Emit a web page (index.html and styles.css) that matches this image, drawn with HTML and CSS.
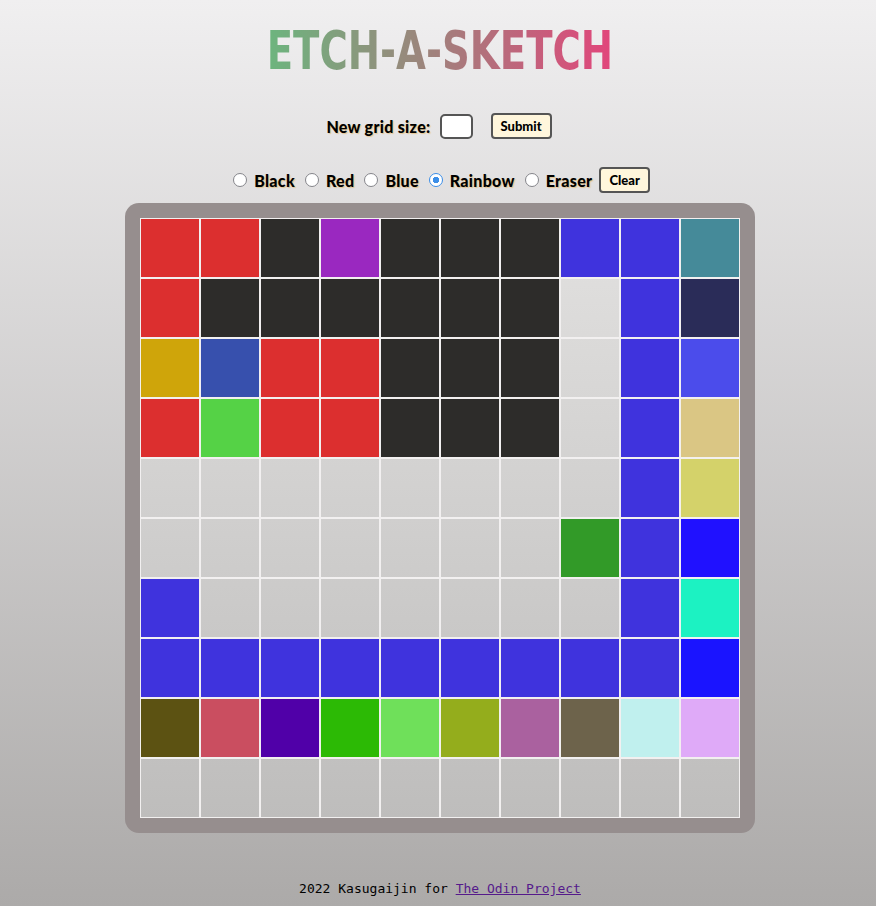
FILE: index.html
```html
<!DOCTYPE html>
<html lang="en">
<head>
<meta charset="utf-8">
<title>Etch-A-Sketch</title>
<link rel="stylesheet" href="styles.css">
</head>
<body>
<main class="page">
  <h1 class="title"><span class="title-text">ETCH-A-SKETCH</span></h1>
  <form class="size-row">
    <label class="lbl" for="size">New grid size:</label>
    <input class="size-input" id="size" type="text">
    <button class="btn" type="button">Submit</button>
  </form>
  <div class="mode-row">
    <label class="opt"><input class="radio" type="radio" name="mode"> Black</label>
    <label class="opt"><input class="radio" type="radio" name="mode"> Red</label>
    <label class="opt"><input class="radio" type="radio" name="mode"> Blue</label>
    <label class="opt"><input class="radio" type="radio" name="mode" checked> Rainbow</label>
    <label class="opt"><input class="radio" type="radio" name="mode"> Eraser</label>
    <button class="btn" type="button">Clear</button>
  </div>
  <div class="board">
    <div class="grid" id="grid"></div>
  </div>
  <footer class="footer">2022 Kasugaijin for <a href="#">The Odin Project</a></footer>
</main>
<script src="script.js"></script>
</body>
</html>
```
FILE: styles.css
```css
html, body { margin: 0; padding: 0; }
body {
  min-height: 906px;
  background: linear-gradient(#f0eff0, #acaaa9);
  font-family: "Lato", "Open Sans", sans-serif;
  color: #000;
}
.page {
  display: flex;
  flex-direction: column;
  align-items: center;
  padding-left: 4px;
}
.title {
  margin: 24px 0 0;
  height: 54px;
  line-height: 54px;
  font-family: "DejaVu Sans Condensed", "DejaVu Sans", sans-serif;
  font-weight: 700;
  font-size: 53px;
  transform: scaleX(0.81);
}
.title-text {
  background: linear-gradient(90deg, #6cb57e 0%, #9c857c 45%, #e2457b 100%);
  -webkit-background-clip: text;
  background-clip: text;
  color: transparent;
}
.size-row {
  margin: 34px 0 0;
  display: flex;
  align-items: center;
  height: 28px;
}
.lbl, .opt {
  font-weight: 900;
  font-size: 16px;
  letter-spacing: 0.3px;
  text-shadow: 1px 1px 1px rgba(230, 160, 40, 0.45);
}
.lbl { margin-left: -2px; }
.size-input {
  margin: 0 18px 0 9px;
  width: 33px;
  height: 25px;
  box-sizing: border-box;
  border: 2px solid #555;
  border-radius: 5px;
  background: #fff;
  padding: 0;
}
.btn {
  font-family: "Lato", sans-serif;
  font-weight: 900;
  font-size: 13px;
  background: #fff6dc;
  border: 2px solid #555;
  border-radius: 4px;
  height: 26px;
  padding: 0 8px;
  color: #000;
}
.mode-row {
  margin-top: 26px;
  display: flex;
  align-items: center;
  height: 28px;
}
.opt {
  display: flex;
  align-items: center;
  margin-right: 7px;
}
.radio {
  appearance: none;
  -webkit-appearance: none;
  margin: 0 7px 0 3px;
  width: 14px;
  height: 14px;
  box-sizing: border-box;
  border: 1.5px solid #85858a;
  border-radius: 50%;
  background: #fff;
}
.radio:checked {
  border-color: #3b8ee8;
  background: radial-gradient(circle, #3b8ee8 0 3px, #fff 3.5px);
}
.board {
  margin-top: 9px;
  padding: 15px;
  background: #968e8e;
  border-radius: 14px;
}
.grid {
  display: grid;
  grid-template-columns: repeat(10, 60px);
  grid-template-rows: repeat(10, 60px);
  background: linear-gradient(#e2e1e0, #bebdbc);
}
.cell {
  box-sizing: border-box;
  border: 1px solid #f2f0f0;
}
.footer {
  margin-top: 48px;
  font-family: "DejaVu Sans Mono", monospace;
  font-size: 13px;
  line-height: 16px;
}
.footer a { color: #551a8b; }
```
FILE: script.js
```js
const E = null;
const R = '#dc2f2f', D = '#2d2c2a', B = '#3f33dd';
const rows = [
  [R, R, D, '#9a28c0', D, D, D, B, B, '#458a99'],
  [R, D, D, D, D, D, D, E, B, '#2a2c58'],
  ['#cfa50a', '#3750ad', R, R, D, D, D, E, B, '#4b4ceb'],
  [R, '#55d246', R, R, D, D, D, E, B, '#dac684'],
  [E, E, E, E, E, E, E, E, B, '#d4d26a'],
  [E, E, E, E, E, E, E, '#329a28', B, '#2011ff'],
  [B, E, E, E, E, E, E, E, B, '#1cf2c2'],
  [B, B, B, B, B, B, B, B, B, '#1a14ff'],
  ['#5c5212', '#ca4e60', '#5000a8', '#2cba05', '#6fe05a', '#94ad1c', '#aa619f', '#6d634b', '#c0f0ee', '#dfaaf8'],
  [E, E, E, E, E, E, E, E, E, E]
];
const grid = document.getElementById('grid');
rows.forEach(r => r.forEach(c => {
  const d = document.createElement('div');
  d.className = 'cell';
  if (c) d.style.backgroundColor = c;
  grid.appendChild(d);
}));
```
